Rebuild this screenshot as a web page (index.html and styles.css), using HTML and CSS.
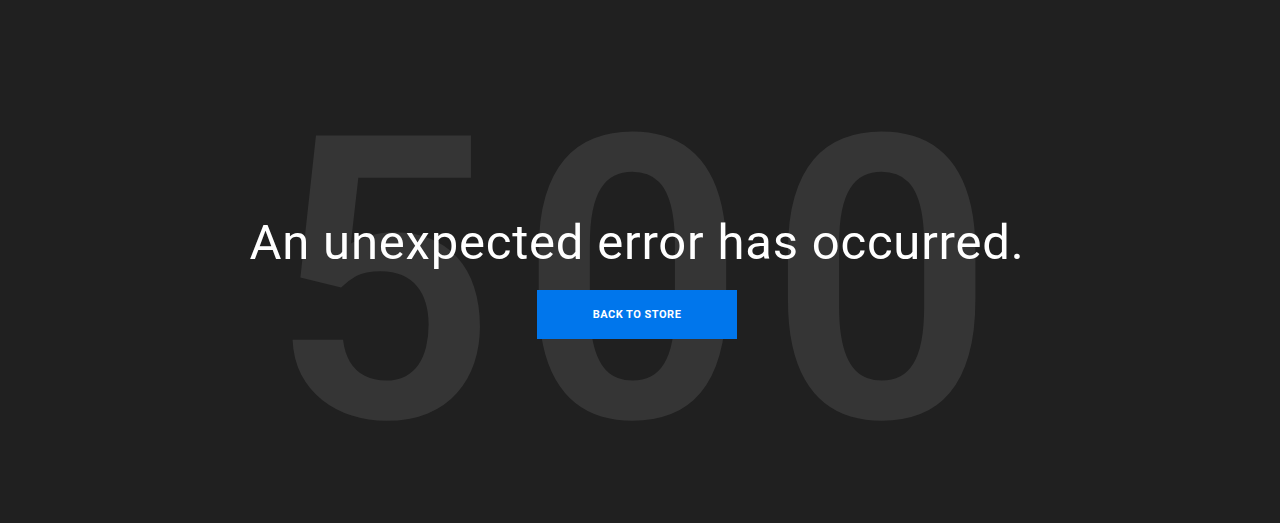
FILE: index.html
```html
<!DOCTYPE html>
<html lang="en">
<head>
    <meta charset="UTF-8">
    <meta name="viewport" content="width=device-width, initial-scale=1.0">
    <title>500 - An unexpected error has occurred</title>
    <link rel="stylesheet" href="styles.css">
</head>
<body>
    <main class="error-page">
        <div class="error-code" aria-hidden="true">500</div>
        <div class="error-content">
            <h1 class="error-title">An unexpected error has occurred.</h1>
            <a class="store-btn" href="#">Back to store</a>
        </div>
    </main>
</body>
</html>
```

FILE: styles.css
```css
html, body {
    margin: 0;
    padding: 0;
}
body {
    background-color: #202020;
    color: #fff;
    font-family: Roboto, 'Noto Sans', sans-serif;
    height: 523px;
    overflow: hidden;
}
.error-page {
    display: grid;
    place-items: center;
    height: 100%;
    padding-right: 6px;
}
.error-code,
.error-content {
    grid-area: 1 / 1;
}
.error-code {
    font-size: 396px;
    line-height: 1;
    font-weight: 600;
    color: #353535;
    letter-spacing: 23px;
    margin-top: 40px;
    margin-left: 14px;
    user-select: none;
}
.error-content {
    display: flex;
    flex-direction: column;
    align-items: center;
    margin-top: 34px;
}
.error-title {
    margin: 0;
    font-size: 49px;
    font-weight: 400;
    line-height: 1;
    letter-spacing: 0.8px;
}
.store-btn {
    display: flex;
    align-items: center;
    justify-content: center;
    width: 200px;
    height: 49px;
    margin-top: 23px;
    background-color: #0076ec;
    color: #fff;
    text-decoration: none;
    text-transform: uppercase;
    font-size: 11px;
    font-weight: 700;
    letter-spacing: 0.5px;
}
```
